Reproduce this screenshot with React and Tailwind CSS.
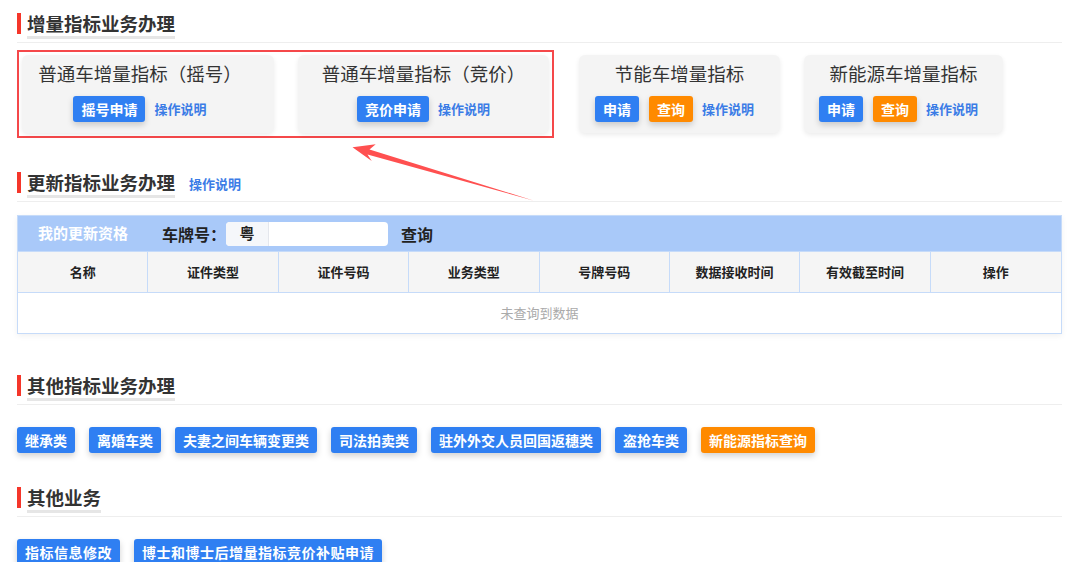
import React from "react";

const blueBtn =
  "h-[26px] px-[8px] rounded-[3px] bg-[#2f7ff2] text-white text-[14px] font-bold leading-[26px] shadow-[0_3px_6px_rgba(0,0,0,0.18)] whitespace-nowrap";
const orangeBtn =
  "h-[26px] px-[8px] rounded-[3px] bg-[#ff8a00] text-white text-[14px] font-bold leading-[26px] shadow-[0_3px_6px_rgba(0,0,0,0.18)] whitespace-nowrap";
const link = "text-[13px] font-bold text-[#3b7ce6] whitespace-nowrap";

function SectionHeader({ title, extra }) {
  return (
    <div className="flex items-start pt-[12px] border-b border-[#eeeeee]">
      <div className="w-[4px] h-[21px] bg-[#f5362a] mt-[1px]" />
      <div className="ml-[6px] mb-[3px] pb-[2px] border-b-[3px] border-[#e6e6e6]">
        <span className="block text-[18.5px] leading-[22px] font-bold text-[#333]">{title}</span>
      </div>
      {extra}
    </div>
  );
}

function Card({ title, className, rowClass = "", children }) {
  return (
    <div
      className={`${className} h-[78px] rounded-[6px] bg-[#f4f4f4] shadow-[0_2px_5px_rgba(0,0,0,0.08)] flex flex-col items-center pt-[6px] gap-[11px]`}
    >
      <div className="text-[18.5px] leading-[24px] text-[#333] whitespace-nowrap">{title}</div>
      <div className={`flex items-center gap-[9px] ${rowClass}`}>{children}</div>
    </div>
  );
}

const columns = ["名称", "证件类型", "证件号码", "业务类型", "号牌号码", "数据接收时间", "有效截至时间", "操作"];

const otherIndex = ["继承类", "离婚车类", "夫妻之间车辆变更类", "司法拍卖类", "驻外外交人员回国返穗类", "盗抢车类"];

export default function App() {
  return (
    <div className="relative w-[1080px] h-[562px] overflow-hidden bg-white pl-[17px] pr-[18px] font-['Noto_Sans_CJK_SC','Noto_Sans',sans-serif]">
      {/* 增量指标 */}
      <SectionHeader title="增量指标业务办理" />
      <div className="mt-[7px] flex items-center">
        <div className="border-2 border-[#f5484a] px-[3px] py-[3px] flex gap-[24px]">
          <Card title="普通车增量指标（摇号）" className="w-[252px] pr-[16px]">
            <button className={blueBtn}>摇号申请</button>
            <span className={link}>操作说明</span>
          </Card>
          <Card title="普通车增量指标（竞价）" className="w-[251px]">
            <button className={blueBtn}>竞价申请</button>
            <span className={link}>操作说明</span>
          </Card>
        </div>
        <div className="ml-[25px]">
          <Card title="节能车增量指标" className="w-[201px]" rowClass="mr-[10px]">
            <div className="flex gap-[10px]">
              <button className={blueBtn}>申请</button>
              <button className={orangeBtn}>查询</button>
            </div>
            <span className={link}>操作说明</span>
          </Card>
        </div>
        <div className="ml-[24px]">
          <Card title="新能源车增量指标" className="w-[199px]" rowClass="mr-[10px]">
            <div className="flex gap-[10px]">
              <button className={blueBtn}>申请</button>
              <button className={orangeBtn}>查询</button>
            </div>
            <span className={link}>操作说明</span>
          </Card>
        </div>
      </div>

      {/* 更新指标 */}
      <div className="mt-[21px]">
        <SectionHeader
          title="更新指标业务办理"
          extra={<span className={`${link} ml-[14px] mt-[2px] leading-[22px]`}>操作说明</span>}
        />
      </div>
      <div className="mt-[13px] border border-[#c6dbf9] shadow-[0_2px_6px_rgba(0,0,0,0.06)]">
        <div className="h-[35px] bg-[#a9c9f9] flex items-center pl-[20px]">
          <span className="text-[15px] font-bold text-white">我的更新资格</span>
          <span className="ml-[34px] text-[16px] font-bold text-[#222]">车牌号：</span>
          <div className="w-[162px] h-[24px] rounded-[4px] bg-white flex overflow-hidden">
            <div className="w-[43px] h-full bg-[#f5f7fa] border-r border-[#e4e7ed] flex items-center justify-center text-[15px] font-bold text-[#222]">
              粤
            </div>
          </div>
          <span className="ml-[13px] text-[16px] font-bold text-[#222]">查询</span>
        </div>
        <div className="grid grid-cols-8 h-[41px] bg-[#f5f5f5] border-t border-[#c6dbf9]">
          {columns.map((c, i) => (
            <div
              key={c}
              className={`flex items-center justify-center text-[13px] font-bold text-[#222] ${
                i < columns.length - 1 ? "border-r border-[#c6dbf9]" : ""
              }`}
            >
              {c}
            </div>
          ))}
        </div>
        <div className="h-[41px] border-t border-[#c6dbf9] flex items-center justify-center text-[13px] text-[#aaa]">
          未查询到数据
        </div>
      </div>

      {/* 其他指标 */}
      <div className="mt-[28px]">
        <SectionHeader title="其他指标业务办理" />
      </div>
      <div className="mt-[22px] flex gap-[14px]">
        {otherIndex.map((t) => (
          <button key={t} className={blueBtn}>
            {t}
          </button>
        ))}
        <button className={orangeBtn}>新能源指标查询</button>
      </div>

      {/* 其他业务 */}
      <div className="mt-[21px]">
        <SectionHeader title="其他业务" />
      </div>
      <div className="mt-[22px] flex gap-[14px]">
        <button className={`${blueBtn} tracking-[0.5px]`}>指标信息修改</button>
        <button className={`${blueBtn} tracking-[0.5px]`}>博士和博士后增量指标竞价补贴申请</button>
      </div>

      {/* 箭头 */}
      <svg className="absolute left-0 top-0 pointer-events-none" width="1080" height="562">
        <polygon
          points="352.5,147.3 375.7,144.3 369.5,149.4 534,200.7 367.5,154.6 371.7,161"
          fill="#ff5050"
        />
      </svg>
    </div>
  );
}
